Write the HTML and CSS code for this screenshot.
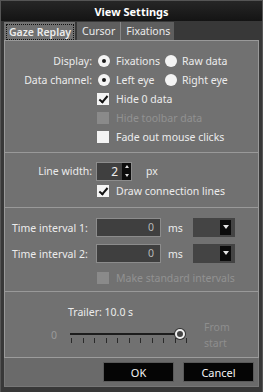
FILE: index.html
```html
<!DOCTYPE html>
<html lang="en">
<head>
    <meta charset="UTF-8">
    <title>View Settings</title>
    <link rel="stylesheet" href="styles.css">
</head>
<body>
    <div class="window">
        <div class="titlebar">View Settings</div>

        <!-- tabs -->
        <div class="tabs">
            <div class="tab active"><span>Gaze Replay</span></div>
            <div class="tab">Cursor</div>
            <div class="tab last">Fixations</div>
        </div>

        <div class="panel">
            <!-- display / channel -->
            <div class="section s1">
                <div class="row">
                    <div class="label">Display:</div>
                    <div class="ctrl">
                        <span class="opt"><span class="radio on"></span>Fixations</span>
                        <span class="opt second"><span class="radio"></span>Raw data</span>
                    </div>
                </div>
                <div class="row">
                    <div class="label">Data channel:</div>
                    <div class="ctrl">
                        <span class="opt"><span class="radio on"></span>Left eye</span>
                        <span class="opt second"><span class="radio"></span>Right eye</span>
                    </div>
                </div>
                <div class="row">
                    <div class="label"></div>
                    <div class="ctrl"><span class="check on"></span>Hide 0 data</div>
                </div>
                <div class="row">
                    <div class="label"></div>
                    <div class="ctrl disabled"><span class="check off"></span>Hide toolbar data</div>
                </div>
                <div class="row">
                    <div class="label"></div>
                    <div class="ctrl"><span class="check"></span>Fade out mouse clicks</div>
                </div>
            </div>

            <!-- line width -->
            <div class="section s2">
                <div class="row tall">
                    <div class="label">Line width:</div>
                    <div class="ctrl">
                        <span class="spin"><span class="val">2</span><span class="arrows"><i class="up"></i><i class="down"></i></span></span>
                        <span class="unit">px</span>
                    </div>
                </div>
                <div class="row">
                    <div class="label"></div>
                    <div class="ctrl"><span class="check on"></span>Draw connection lines</div>
                </div>
            </div>

            <!-- intervals -->
            <div class="section s3">
                <div class="row">
                    <div class="label left">Time interval 1:</div>
                    <div class="ctrl">
                        <span class="field">0</span>
                        <span class="ms">ms</span>
                        <span class="combo"><span class="drop"></span></span>
                    </div>
                </div>
                <div class="row r2">
                    <div class="label left">Time interval 2:</div>
                    <div class="ctrl">
                        <span class="field">0</span>
                        <span class="ms">ms</span>
                        <span class="combo"><span class="drop"></span></span>
                    </div>
                </div>
                <div class="row r3">
                    <div class="label"></div>
                    <div class="ctrl disabled"><span class="check off"></span>Make standard intervals</div>
                </div>
            </div>

            <!-- trailer -->
            <div class="section s4">
                <div class="trailer">Trailer: 10.0 s</div>
                <div class="slider-row">
                    <span class="zero">0</span>
                    <div class="slider">
                        <div class="track"></div>
                        <div class="thumb"></div>
                        <div class="ticks">
                            <i></i><i></i><i></i><i></i><i></i><i></i><i></i><i></i><i></i><i></i><i></i>
                        </div>
                    </div>
                    <span class="from">From<br>start</span>
                </div>
            </div>
        </div>

        <div class="footer">
            <button class="btn">OK</button>
            <button class="btn">Cancel</button>
        </div>
    </div>
</body>
</html>
```

FILE: styles.css
```css
body {
    margin: 0;
    background: #2e2e2e;
    font-family: "Noto Sans", "Open Sans", sans-serif;
    font-size: 10.5px;
    color: #ececec;
}

.window {
    width: 263px;
    height: 392px;
    box-sizing: border-box;
    background: #383838;
    border-left: 1px solid #555;
    border-right: 1px solid #555;
    padding: 0 3px 5px 3px;
}

.titlebar {
    height: 21px;
    line-height: 21px;
    text-align: center;
    font-weight: bold;
    font-size: 11px;
    color: #fff;
    background: linear-gradient(#262626, #141414);
    margin: 0 -3px;
    border-top: 1px solid #555;
    box-sizing: border-box;
}

.tabs {
    display: flex;
    height: 18px;
    padding-top: 1px;
}

.tab {
    background: #5e5e5e;
    padding: 0 5px;
    line-height: 18px;
    border-right: 1px solid #888;
}

.tab.last {
    border-right: none;
    padding-right: 4px;
}

.tab.active {
    background: #717171;
    padding: 2px 1px 0 2px;
    border-right: none;
    margin-right: 2px;
    font-weight: 600;
}

.tab.active span {
    display: block;
    border: 1px dotted #111;
    line-height: 14px;
    padding: 0 2px;
}

.panel {
    background: #717171;
    border: 1px solid #999;
    border-bottom: 1px solid #9c9c9c;
}

.section {
    border-bottom: 1px solid #999;
}

.s1 {
    padding: 10px 0 6px;
}

.s2 {
    padding: 8px 0 7px;
}

.s3 {
    padding: 10px 0 4px;
}

.s4 {
    border-bottom: none;
    height: 65px;
    padding-top: 13px;
    box-sizing: border-box;
}

.row {
    display: flex;
    align-items: center;
    height: 19px;
}

.row.tall {
    height: 20px;
}

.row.r2 {
    margin-top: 7px;
}

.row.r3 {
    margin-top: 5px;
}

.label {
    width: 87px;
    text-align: right;
    flex-shrink: 0;
}

.label.left {
    text-align: left;
    padding-left: 7px;
    box-sizing: border-box;
}

.ctrl {
    display: flex;
    align-items: center;
    padding-left: 4px;
}

.disabled {
    color: #929292;
}

.opt {
    display: flex;
    align-items: center;
    width: 69px;
}

.opt.second {
    width: auto;
}

.radio {
    width: 12px;
    height: 12px;
    border-radius: 50%;
    background: #f4f4f4;
    margin: 0 6px 0 2px;
    position: relative;
}

.opt.second .radio {
    margin: 0 5px 0 0;
}

.radio.on::after {
    content: "";
    position: absolute;
    left: 4px;
    top: 4px;
    width: 4px;
    height: 4px;
    border-radius: 50%;
    background: #1a1a1a;
}

.check {
    width: 12px;
    height: 12px;
    background: #f4f4f4;
    margin: 0 7px 0 1px;
    position: relative;
}

.check.off {
    background: #8a8a8a;
}

.check.on::after {
    content: "";
    position: absolute;
    left: 4px;
    top: 1px;
    width: 3px;
    height: 7px;
    border: solid #111;
    border-width: 0 2px 2px 0;
    transform: rotate(40deg);
}

.spin {
    display: flex;
    width: 36px;
    height: 19px;
    box-sizing: border-box;
    background: #3f3f3f;
    border: 1px solid #8c8c8c;
}

.spin .val {
    flex: 1;
    text-align: right;
    line-height: 17px;
    padding-right: 4px;
    font-size: 12px;
}

.arrows {
    width: 9px;
    background: #0c0c0c;
    display: flex;
    flex-direction: column;
    justify-content: space-around;
    align-items: center;
}

.arrows i {
    width: 0;
    height: 0;
    border-left: 2px solid transparent;
    border-right: 2px solid transparent;
}

.arrows .up {
    border-bottom: 3px solid #ddd;
}

.arrows .down {
    border-top: 3px solid #ddd;
}

.unit {
    margin-left: 14px;
}

.field {
    width: 65px;
    height: 19px;
    box-sizing: border-box;
    background: #3f3f3f;
    border: 1px solid #8c8c8c;
    text-align: right;
    padding-right: 6px;
    line-height: 17px;
    color: #b8b8b8;
}

.ms {
    margin-left: 7px;
    width: 25px;
}

.combo {
    display: flex;
    justify-content: flex-end;
    align-items: center;
    width: 42px;
    height: 19px;
    background: #444;
    padding-right: 4px;
    box-sizing: border-box;
}

.drop {
    width: 11px;
    height: 15px;
    background: #0c0c0c;
    position: relative;
}

.drop::after {
    content: "";
    position: absolute;
    left: 3px;
    top: 5px;
    border-left: 3px solid transparent;
    border-right: 3px solid transparent;
    border-top: 4px solid #e6e6e6;
}

.trailer {
    padding-left: 63px;
    line-height: 15px;
}

.slider-row {
    display: flex;
    align-items: center;
    margin-top: 1px;
    height: 28px;
}

.zero {
    margin-left: 46px;
    width: 18px;
    color: #9a9a9a;
}

.slider {
    width: 122px;
    height: 28px;
    position: relative;
}

.track {
    position: absolute;
    left: 1px;
    right: 6px;
    top: 12px;
    height: 2px;
    background: #1c1c1c;
}

.thumb {
    position: absolute;
    left: 106px;
    top: 8px;
    width: 6px;
    height: 6px;
    border-radius: 50%;
    background: #444;
    border: 2px solid #f0f0f0;
    box-shadow: 0 0 0 1px #333;
}

.ticks {
    position: absolute;
    left: 2px;
    top: 17px;
    width: 116px;
    display: flex;
    justify-content: space-between;
}

.ticks i {
    width: 1px;
    height: 5px;
    background: #2a2a2a;
}

.from {
    margin-left: 13px;
    line-height: 16px;
    color: #8e8e8e;
}

.footer {
    display: flex;
    justify-content: flex-end;
    gap: 9px;
    background: #6a6a6a;
    height: 29px;
    padding: 4px 4px 0 0;
    box-sizing: border-box;
    border: 1px solid #777;
    border-top: none;
}

.btn {
    width: 71px;
    height: 20px;
    background: #050505;
    border: 1px solid #5a5a5a;
    color: #f4f4f4;
    font-family: "Noto Sans", "Open Sans", sans-serif;
    font-size: 11px;
    padding: 0;
}
```
